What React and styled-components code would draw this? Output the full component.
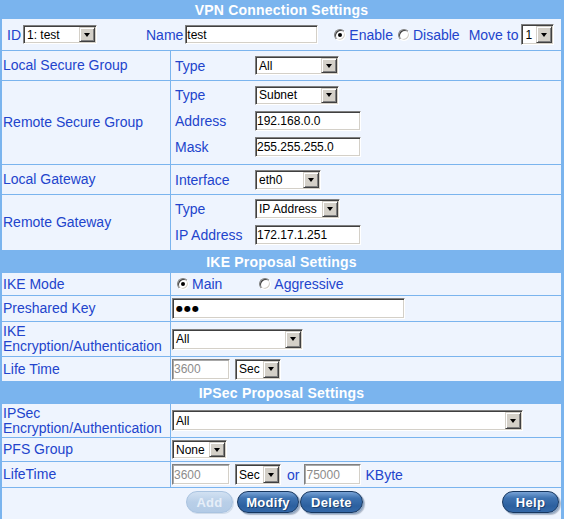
import React from "react";
import styled, { createGlobalStyle } from "styled-components";

const LINE = "#7ab4ee";
const CELL = "#eef4fe";
const BLUE = "#2244cc";

const GlobalStyle = createGlobalStyle`
  html, body {
    margin: 0;
    padding: 0;
    background: #fff;
  }
  body {
    font-family: "Liberation Sans", Arial, sans-serif;
  }
`;

const Table = styled.div`
  width: 564px;
  box-sizing: border-box;
  padding: 0 3px 0 2px;
  background: ${LINE};
  display: flex;
  flex-direction: column;
  gap: 1px;
`;

const Header = styled.div`
  height: ${(p) => p.$h}px;
  padding-top: ${(p) => p.$pt || 0}px;
  box-sizing: border-box;
  display: flex;
  align-items: center;
  justify-content: center;
  color: #fff;
  font-weight: bold;
  font-size: 14px;
  letter-spacing: 0.2px;
`;

const Row = styled.div`
  display: grid;
  grid-template-columns: ${(p) => (p.$full ? "1fr" : "168px 1fr")};
  column-gap: 1px;
  height: ${(p) => p.$h}px;
`;

const Cell = styled.div`
  background: ${CELL};
  display: flex;
  align-items: center;
  min-width: 0;
  box-sizing: border-box;
`;

const LabelCell = styled(Cell)`
  padding-left: 1px;
  color: ${BLUE};
  font-size: 14px;
  line-height: 15px;
`;

const ControlCell = styled(Cell)`
  padding-left: ${(p) => p.$pl ?? 1}px;
`;

const StackCell = styled(Cell)`
  flex-direction: column;
  align-items: stretch;
  justify-content: ${(p) => (p.$top ? "flex-start" : "center")};
  padding-top: ${(p) => p.$top || 0}px;
`;

const ButtonCell = styled(Cell)`
  align-items: flex-start;
  padding: 3px 2px 0 0;
`;

const SubRow = styled.div`
  height: 26px;
  display: flex;
  align-items: center;
`;

const SubLabel = styled.span`
  box-sizing: border-box;
  width: 84px;
  padding-left: 4px;
  color: ${BLUE};
  font-size: 14px;
  flex: none;
`;

const Text = styled.span`
  color: ${BLUE};
  font-size: 14px;
  white-space: nowrap;
  margin-left: ${(p) => p.$ml || 0}px;
  flex: none;
`;

const sunken = `
  border: 1px solid;
  border-color: #808080 #ffffff #ffffff #808080;
`;

const Input = styled.input`
  box-sizing: border-box;
  width: ${(p) => p.$w}px;
  height: ${(p) => p.$h || 20}px;
  margin: 0 0 0 ${(p) => p.$ml || 0}px;
  padding: 0 0 0 1px;
  ${sunken}
  box-shadow: inset 1px 1px ${(p) => (p.$dim ? "#a8a8a8" : "#404040")},
    inset -1px -1px #d4d0c8;
  background: #fff;
  font-family: "Liberation Sans", Arial, sans-serif;
  font-size: 12px;
  color: ${(p) => (p.$dim ? "#8c8c8c" : "#000")};
  outline: none;
  flex: none;
`;

const SecretInput = styled(Input)`
  font-family: "DejaVu Sans", sans-serif;
  font-size: 8px;
  letter-spacing: 1px;
  padding-left: 3px;
`;

const SelectBox = styled.div`
  box-sizing: border-box;
  width: ${(p) => p.$w}px;
  height: ${(p) => p.$h}px;
  margin-left: ${(p) => p.$ml || 0}px;
  padding: 1px;
  ${sunken}
  box-shadow: inset 1px 1px #404040, inset -1px -1px #d4d0c8;
  background: #fff;
  display: flex;
  align-items: stretch;
  font-size: 12px;
  color: #000;
  flex: none;
`;

const SelectValue = styled.span`
  flex: 1;
  display: flex;
  align-items: center;
  padding-left: 2px;
  overflow: hidden;
  white-space: nowrap;
`;

const SelectArrow = styled.span`
  width: 16px;
  box-sizing: border-box;
  background: #d4d0c8;
  border: 1px solid;
  border-color: #d4d0c8 #404040 #404040 #d4d0c8;
  box-shadow: inset 1px 1px #fff, inset -1px -1px #808080;
  display: flex;
  align-items: center;
  justify-content: center;
  &::after {
    content: "";
    border-left: 3.5px solid transparent;
    border-right: 3.5px solid transparent;
    border-top: 4px solid #000;
  }
`;

const Radio = styled.span`
  box-sizing: border-box;
  width: 12px;
  height: 12px;
  margin-left: ${(p) => p.$ml || 0}px;
  border-radius: 50%;
  background: #fff;
  border: 1px solid;
  border-color: #808080 #ffffff #ffffff #808080;
  box-shadow: inset 1px 1px #404040, inset -1px -1px #d4d0c8;
  display: flex;
  align-items: center;
  justify-content: center;
  flex: none;
  &::after {
    content: "";
    width: 4px;
    height: 4px;
    border-radius: 50%;
    background: ${(p) => (p.$checked ? "#000" : "transparent")};
  }
`;

const Button = styled.button`
  box-sizing: border-box;
  width: ${(p) => p.$w}px;
  height: 22px;
  margin: 0 0 0 ${(p) => (p.$auto ? "auto" : `${p.$ml || 0}px`)};
  padding: 0;
  border-radius: 11px;
  border: 1px solid #17375f;
  background: linear-gradient(
    to bottom,
    #79a3d6 0%,
    #3f73b1 30%,
    #2c609f 70%,
    #3468a8 100%
  );
  box-shadow: 1px 1px 0 #8ea6c4, 2px 2px 1px rgba(30, 50, 80, 0.3);
  color: #fff;
  font-family: "Liberation Sans", Arial, sans-serif;
  font-weight: bold;
  font-size: 13px;
  letter-spacing: 0.3px;
  text-shadow: 1px 1px 0 rgba(10, 30, 60, 0.5);
  flex: none;
  &:disabled {
    border-color: #a9c3e0;
    background: linear-gradient(to bottom, #d2e1f2 0%, #b9cfe8 50%, #b3cbe6 100%);
    box-shadow: 1px 1px 0 #d0dcea;
    color: #e6eef8;
    text-shadow: none;
  }
`;

const Select = ({ w, h = 20, ml, children }) => (
  <SelectBox $w={w} $h={h} $ml={ml}>
    <SelectValue>{children}</SelectValue>
    <SelectArrow />
  </SelectBox>
);

const App = () => {
  return (
    <>
      <GlobalStyle />
      <Table>
        <Header $h={18} $pt={1}>VPN Connection Settings</Header>

        <Row $h={31} $full>
          <Cell>
            <Text $ml={5}>ID</Text>
            <Select w={74} h={19} ml={2}>1: test</Select>
            <Text $ml={49}>Name</Text>
            <Input $w={133} $h={19} $ml={2} value="test" readOnly />
            <Radio $checked $ml={16} />
            <Text $ml={3}>Enable</Text>
            <Radio $ml={5} />
            <Text $ml={3}>Disable</Text>
            <Text $ml={9}>Move to</Text>
            <Select w={33} h={21} ml={3}>1</Select>
          </Cell>
        </Row>

        <Row $h={29}>
          <LabelCell>Local Secure Group</LabelCell>
          <StackCell>
            <SubRow>
              <SubLabel>Type</SubLabel>
              <Select w={84} h={19}>All</Select>
            </SubRow>
          </StackCell>
        </Row>

        <Row $h={83}>
          <LabelCell>Remote Secure Group</LabelCell>
          <StackCell $top={1}>
            <SubRow>
              <SubLabel>Type</SubLabel>
              <Select w={84} h={19}>Subnet</Select>
            </SubRow>
            <SubRow>
              <SubLabel>Address</SubLabel>
              <Input $w={106} value="192.168.0.0" readOnly />
            </SubRow>
            <SubRow>
              <SubLabel>Mask</SubLabel>
              <Input $w={106} value="255.255.255.0" readOnly />
            </SubRow>
          </StackCell>
        </Row>

        <Row $h={29}>
          <LabelCell>Local Gateway</LabelCell>
          <StackCell>
            <SubRow>
              <SubLabel>Interface</SubLabel>
              <Select w={66}>eth0</Select>
            </SubRow>
          </StackCell>
        </Row>

        <Row $h={55}>
          <LabelCell>Remote Gateway</LabelCell>
          <StackCell $top={1}>
            <SubRow>
              <SubLabel>Type</SubLabel>
              <Select w={85}>IP Address</Select>
            </SubRow>
            <SubRow>
              <SubLabel>IP Address</SubLabel>
              <Input $w={106} value="172.17.1.251" readOnly />
            </SubRow>
          </StackCell>
        </Row>

        <Header $h={21}>IKE Proposal Settings</Header>

        <Row $h={22}>
          <LabelCell>IKE Mode</LabelCell>
          <ControlCell $pl={6}>
            <Radio $checked />
            <Text $ml={3}>Main</Text>
            <Radio $ml={37} />
            <Text $ml={3}>Aggressive</Text>
          </ControlCell>
        </Row>

        <Row $h={25}>
          <LabelCell>Preshared Key</LabelCell>
          <ControlCell>
            <SecretInput $w={233} $h={21} value="●●●" readOnly />
          </ControlCell>
        </Row>

        <Row $h={34}>
          <LabelCell>
            IKE
            <br />
            Encryption/Authentication
          </LabelCell>
          <ControlCell>
            <Select w={131} h={21}>All</Select>
          </ControlCell>
        </Row>

        <Row $h={24}>
          <LabelCell>Life Time</LabelCell>
          <ControlCell>
            <Input $w={58} $h={21} $dim value="3600" readOnly />
            <Select w={46} h={21} ml={5}>Sec</Select>
          </ControlCell>
        </Row>

        <Header $h={21}>IPSec Proposal Settings</Header>

        <Row $h={33}>
          <LabelCell>
            IPSec
            <br />
            Encryption/Authentication
          </LabelCell>
          <ControlCell>
            <Select w={351} h={21}>All</Select>
          </ControlCell>
        </Row>

        <Row $h={23}>
          <LabelCell>PFS Group</LabelCell>
          <ControlCell>
            <Select w={55} h={19}>None</Select>
          </ControlCell>
        </Row>

        <Row $h={25}>
          <LabelCell>LifeTime</LabelCell>
          <ControlCell>
            <Input $w={58} $h={21} $dim value="3600" readOnly />
            <Select w={46} h={21} ml={5}>Sec</Select>
            <Text $ml={6}>or</Text>
            <Input $w={57} $h={21} $ml={5} $dim value="75000" readOnly />
            <Text $ml={4}>KByte</Text>
          </ControlCell>
        </Row>

        <Row $h={32} $full>
          <ButtonCell>
            <Button type="button" $w={47} $ml={184} disabled>
              Add
            </Button>
            <Button type="button" $w={62} $ml={4}>
              Modify
            </Button>
            <Button type="button" $w={63} $ml={1}>
              Delete
            </Button>
            <Button type="button" $w={57} $auto>
              Help
            </Button>
          </ButtonCell>
        </Row>
      </Table>
    </>
  );
};

export default App;
